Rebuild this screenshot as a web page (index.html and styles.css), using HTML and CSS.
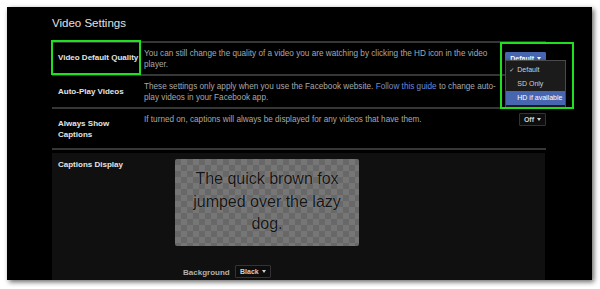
FILE: index.html
```html
<!DOCTYPE html>
<html lang="en">
<head>
<meta charset="UTF-8">
<meta name="viewport" content="width=device-width, initial-scale=1.0">
<title>Video Settings</title>
<link rel="stylesheet" href="styles.css">
</head>
<body>

<div class="panel">
    <h2 class="title">Video Settings</h2>

    <div class="rows">
        <div class="row">
            <div class="label marked">Video Default Quality</div>
            <div class="desc">You can still change the quality of a video you are watching by clicking the HD icon in the video player.</div>
            <div class="ctrl">
                <div class="dropdown">
                    <div class="select select-blue">Default <span class="caret"></span></div>
                    <ul class="menu">
                        <li class="checked">Default</li>
                        <li>SD Only</li>
                        <li class="active">HD if available</li>
                    </ul>
                    <div class="mark-box"></div>
                </div>
            </div>
        </div>

        <div class="row">
            <div class="label">Auto-Play Videos</div>
            <div class="desc">These settings only apply when you use the Facebook website. <a href="#" class="link">Follow this guide</a> to change auto-play videos in your Facebook app.</div>
            <div class="ctrl"></div>
        </div>

        <div class="row row-tall">
            <div class="label">Always Show Captions</div>
            <div class="desc">If turned on, captions will always be displayed for any videos that have them.</div>
            <div class="ctrl">
                <div class="select">Off <span class="caret"></span></div>
            </div>
        </div>
    </div>

    <div class="captions">
        <div class="label cap-label">Captions Display</div>
        <div class="cap-body">
            <div class="preview">The quick brown fox jumped over the lazy dog.</div>
            <div class="cap-opt">
                <span class="opt-label">Background Color</span>
                <span class="select">Black <span class="caret"></span></span>
            </div>
        </div>
    </div>
</div>

</body>
</html>
```

FILE: styles.css
```css
body {
    margin: 0;
    padding: 0;
    background-color: #fff;
    font-family: "Liberation Sans", Arial, sans-serif;
}

.panel {
    margin: 7px;
    width: 585px;
    height: 273px;
    padding-left: 45px;
    box-sizing: border-box;
    background-color: #000;
    box-shadow: 2px 2px 5px rgba(0, 0, 0, 0.6);
    overflow: hidden;
}

.title {
    margin: 0;
    padding: 9px 0 11px 0;
    font-size: 11.5px;
    line-height: 14px;
    font-weight: normal;
    color: #e2e2e2;
}

.rows {
    width: 494px;
    margin-bottom: 3px;
}

.row {
    display: grid;
    grid-template-columns: 88px 360px 1fr;
    min-height: 33px;
    box-sizing: border-box;
    border-top: 2px solid #363636;
}

.row-tall {
    min-height: 43px;
    border-bottom: 2px solid #363636;
}

.label {
    padding-left: 6px;
    font-size: 8px;
    line-height: 11px;
    font-weight: bold;
    color: #e4e4e4;
    align-self: center;
}

.marked {
    align-self: stretch;
    display: flex;
    align-items: center;
    outline: 2px solid #1fe01f;
    outline-offset: -1px;
    margin-top: -2px;
}

.desc {
    padding: 4.5px 4px 0 4px;
    font-size: 8.2px;
    line-height: 11px;
    color: #a8a8a8;
}

.link {
    color: #6f8bd6;
    text-decoration: none;
}

.ctrl {
    display: flex;
    justify-content: flex-end;
    align-items: flex-start;
    padding-top: 4px;
}

.dropdown {
    position: relative;
}

.select {
    display: inline-flex;
    align-items: center;
    gap: 3px;
    height: 13px;
    padding: 0 4px;
    box-sizing: border-box;
    font-size: 7px;
    font-weight: bold;
    color: #cfcfcf;
    background-color: #0d0d0d;
    border: 1px solid #333;
    border-radius: 1px;
}

.select-blue {
    color: #fff;
    background-color: #4866b0;
    border-color: #4866b0;
}

.caret {
    width: 0;
    height: 0;
    border-left: 2.5px solid transparent;
    border-right: 2.5px solid transparent;
    border-top: 3px solid currentColor;
}

.menu {
    position: absolute;
    top: 13px;
    left: 0;
    width: 61px;
    margin: 0;
    padding: 2px 0;
    box-sizing: border-box;
    list-style: none;
    background-color: #1b1b1b;
    border: 1px solid #4a4a4a;
    box-shadow: 1px 1px 3px rgba(0, 0, 0, 0.7);
}

.menu li {
    position: relative;
    height: 14px;
    line-height: 14px;
    padding-left: 11px;
    font-size: 7px;
    color: #cfcfcf;
}

.menu li.checked::before {
    content: "\2713";
    position: absolute;
    left: 3px;
    font-size: 6px;
    font-family: "DejaVu Sans", sans-serif;
}

.menu li.active {
    color: #fff;
    background-color: #4866b0;
}

.mark-box {
    position: absolute;
    left: -5px;
    top: -5px;
    width: 74px;
    height: 67px;
    box-sizing: border-box;
    border: 2px solid #1fe01f;
}

.captions {
    display: grid;
    grid-template-columns: 123px 1fr;
    width: 493px;
    height: 200px;
    background-color: #101010;
}

.cap-label {
    align-self: start;
    padding-top: 7px;
    line-height: 10px;
}

.cap-body {
    padding-top: 6px;
}

.preview {
    width: 184px;
    height: 87px;
    box-sizing: border-box;
    padding: 9px 8px 0 8px;
    border-radius: 2px;
    background: repeating-conic-gradient(#767676 0 25%, #686868 0 50%) 0 0 / 12px 12px;
    text-align: center;
    font-size: 16px;
    line-height: 22.5px;
    color: #141414;
    text-shadow: 0 0 1px rgba(255, 255, 255, 0.35);
}

.cap-opt {
    display: flex;
    align-items: flex-start;
    gap: 4px;
    margin-top: 19px;
    padding-left: 8px;
}

.opt-label {
    width: 48px;
    padding-top: 1.5px;
    font-size: 8px;
    line-height: 11px;
    font-weight: bold;
    color: #b0b0b0;
}
```
